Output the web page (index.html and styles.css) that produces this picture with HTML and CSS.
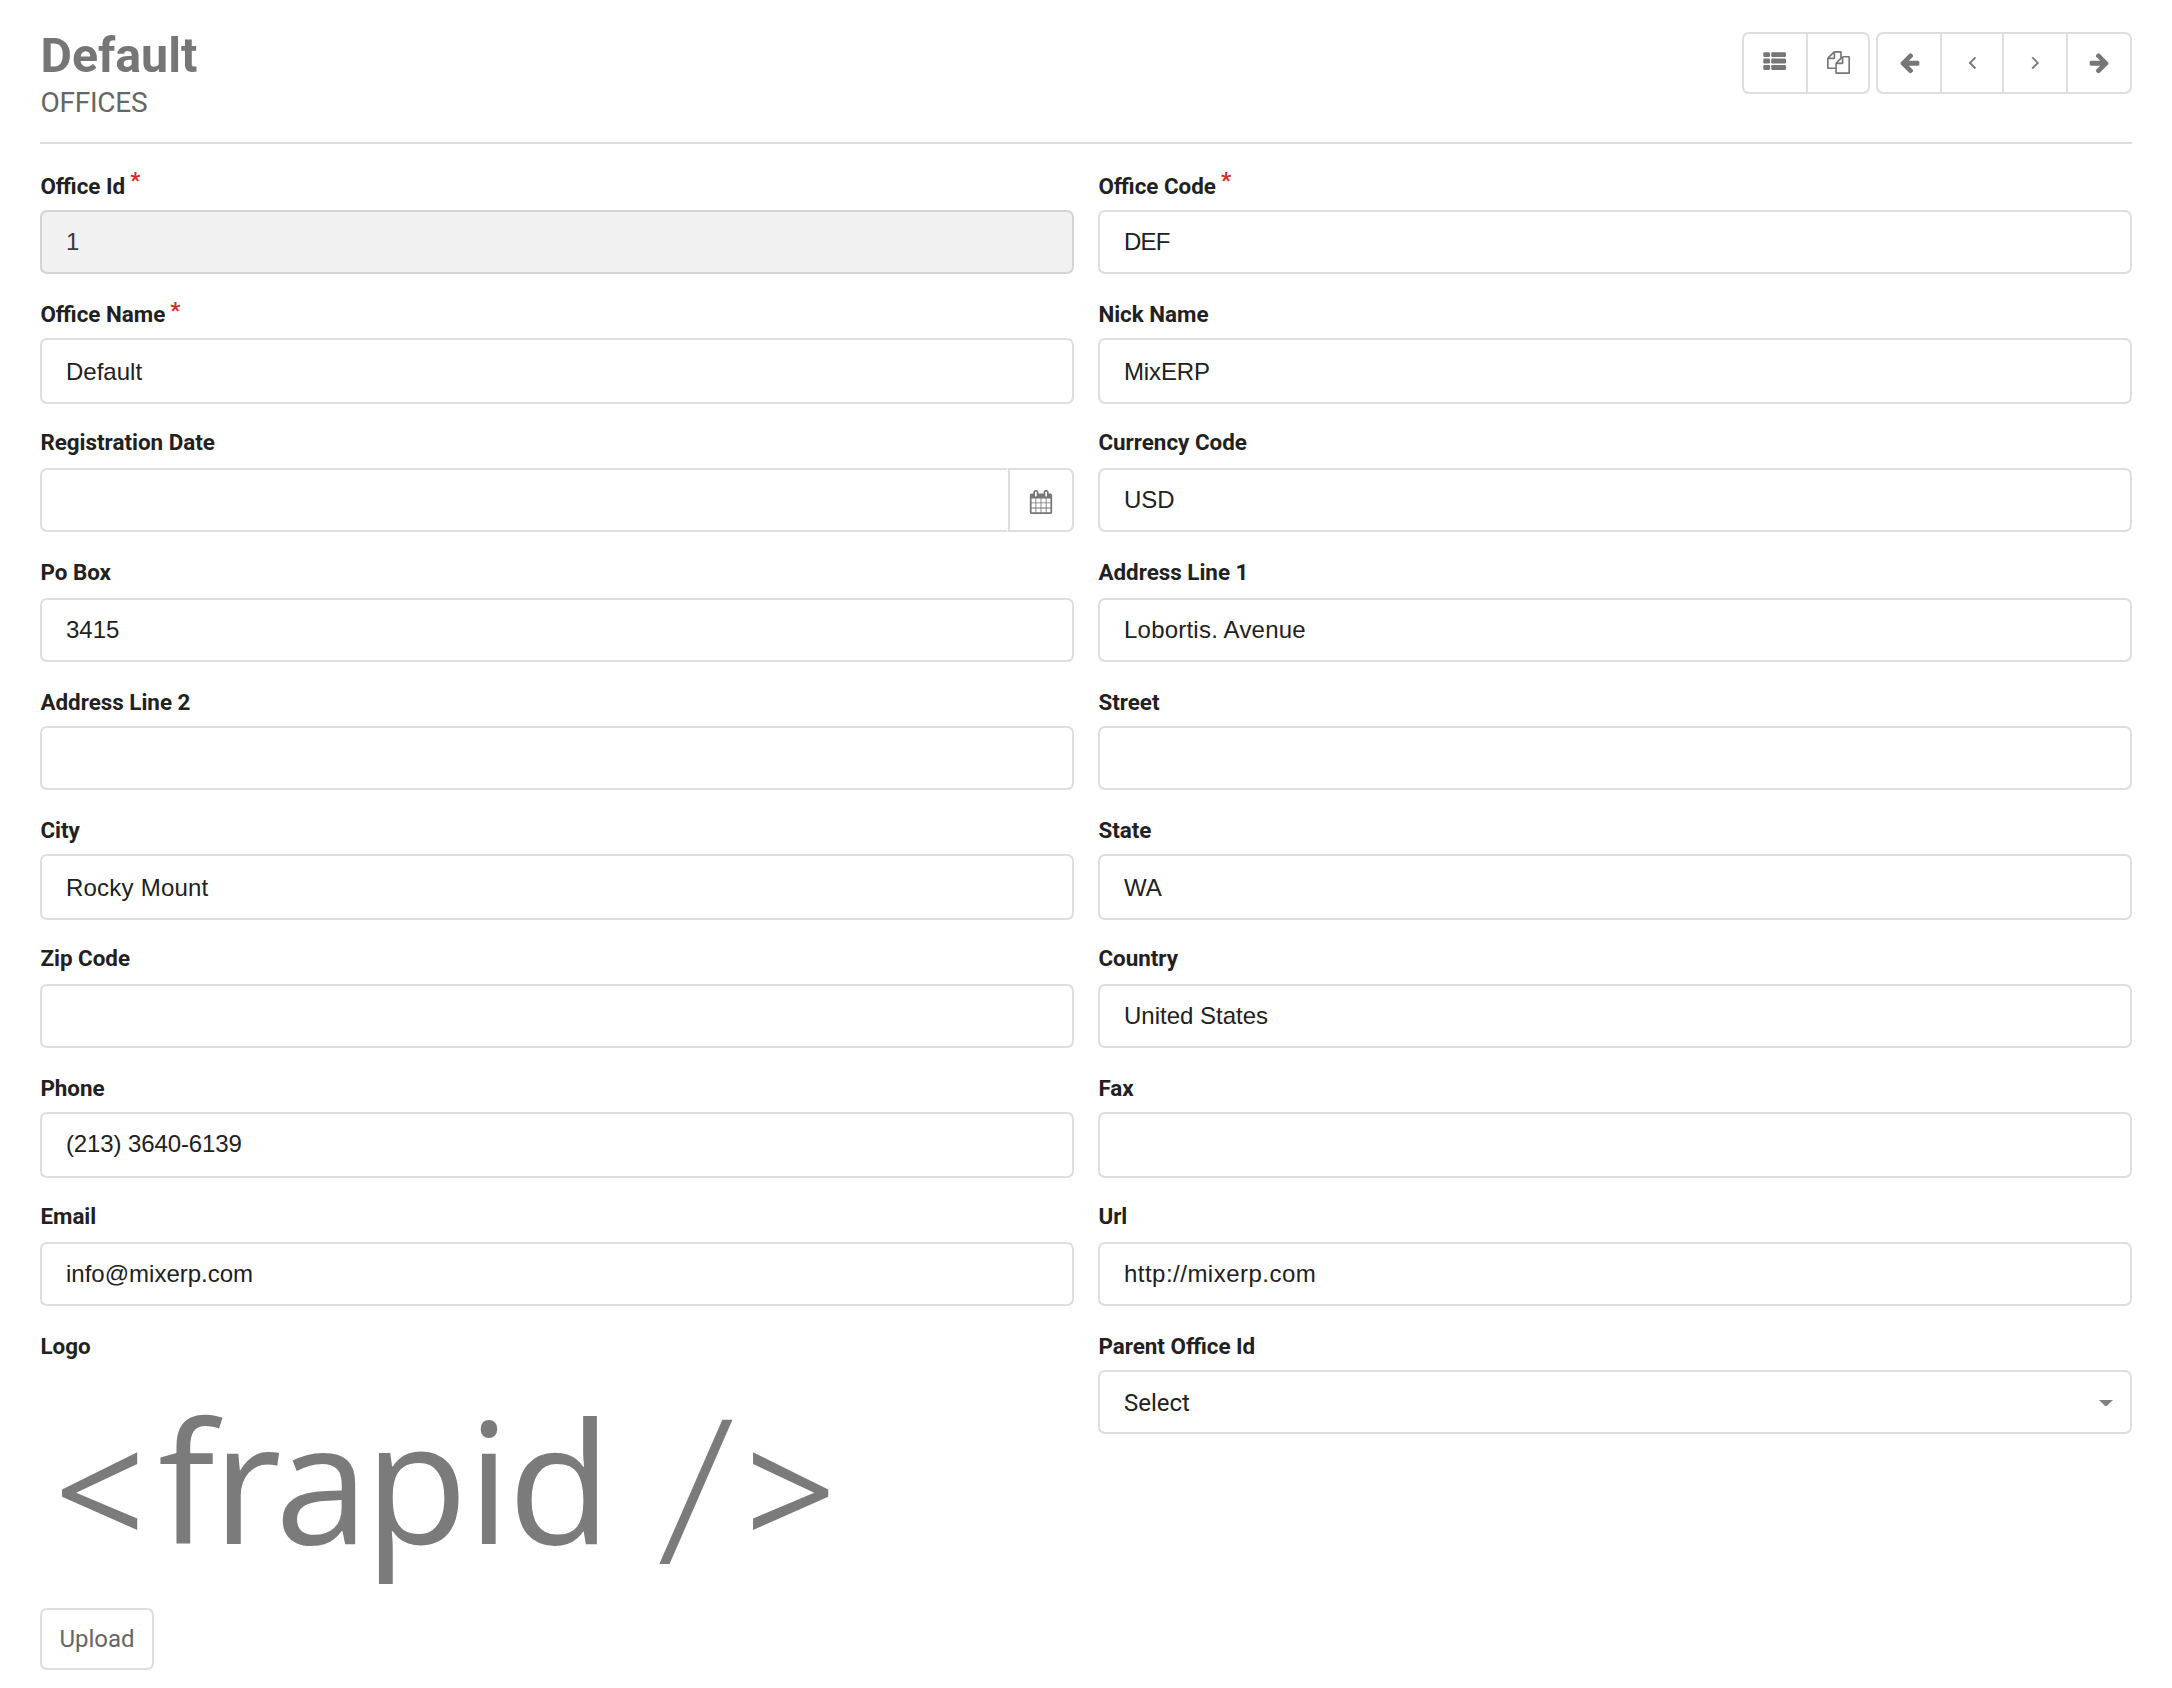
FILE: index.html
```html
<!DOCTYPE html>
<html lang="en">
<head>
<meta charset="utf-8">
<title>Default - Offices</title>
<link rel="stylesheet" href="styles.css">
</head>
<body>
<header class="page-header">
  <div class="heading">
    <h1 class="title">Default</h1>
    <p class="subtitle">OFFICES</p>
  </div>
  <nav class="toolbar">
    <div class="button-group">
      <button class="tool" aria-label="List"><svg class="icon" viewBox="0 0 24 24" width="24" height="24"><rect x="0.3" y="2.2" width="6.7" height="4.8" rx="1.2"/><rect x="8.2" y="2.2" width="14.8" height="4.8" rx="1.2"/><rect x="0.3" y="8.6" width="6.7" height="4.8" rx="1.2"/><rect x="8.2" y="8.6" width="14.8" height="4.8" rx="1.2"/><rect x="0.3" y="15.1" width="6.7" height="4.8" rx="1.2"/><rect x="8.2" y="15.1" width="14.8" height="4.8" rx="1.2"/></svg></button>
      <button class="tool tool-narrow" aria-label="Duplicate"><svg class="icon" viewBox="0 0 1792 1792" width="23" height="23"><path d="M1696 384q40 0 68 28t28 68v1216q0 40-28 68t-68 28h-960q-40 0-68-28t-28-68v-288h-544q-40 0-68-28t-28-68v-672q0-40 20-88t48-76l408-408q28-28 76-48t88-20h416q40 0 68 28t28 68v328q68-40 128-40h416zm-544 213l-299 299h299v-299zm-640-384l-299 299h299v-299zm196 647l316-316v-416h-384v416q0 40-28 68t-68 28h-416v640h512v-256q0-40 20-88t48-76zm956 804v-1152h-384v416q0 40-28 68t-68 28h-416v640h896z"/></svg></button>
    </div>
    <div class="button-group">
      <button class="tool" aria-label="First"><svg class="icon" viewBox="0 0 1792 1792" width="23" height="23"><path d="M1664 896v128q0 53-32.500 90.500t-84.500 37.500h-704l293 294q38 36 38 90t-38 90l-75 76q-37 37-90 37-52 0-91-37l-651-652q-37-37-37-90 0-52 37-91l651-650q38-38 91-38 52 0 90 38l75 74q38 38 38 91t-38 91l-293 293h704q52 0 84.500 37.500t32.500 90.500z"/></svg></button>
      <button class="tool tool-narrow" aria-label="Previous"><svg class="icon icon-line" viewBox="0 0 24 24" width="24" height="24"><path d="M15.500 7.300 9.900 12.900l5.600 5.600"/></svg></button>
      <button class="tool" aria-label="Next"><svg class="icon icon-line" viewBox="0 0 24 24" width="24" height="24"><path d="M9.200 7.300l5.600 5.600-5.600 5.600"/></svg></button>
      <button class="tool" aria-label="Last"><svg class="icon icon-flip" viewBox="0 0 1792 1792" width="23" height="23"><path d="M1664 896v128q0 53-32.500 90.500t-84.500 37.500h-704l293 294q38 36 38 90t-38 90l-75 76q-37 37-90 37-52 0-91-37l-651-652q-37-37-37-90 0-52 37-91l651-650q38-38 91-38 52 0 90 38l75 74q38 38 38 91t-38 91l-293 293h704q52 0 84.500 37.500t32.500 90.500z"/></svg></button>
    </div>
  </nav>
</header>

<form class="form">
  <div class="field"><label class="label">Office Id<span class="star star-high">*</span></label><input class="input" value="1" disabled></div>
  <div class="field"><label class="label">Office Code<span class="star star-high">*</span></label><input class="input tight" value="DEF"></div>

  <div class="field"><label class="label">Office Name<span class="star">*</span></label><input class="input tall" value="Default"></div>
  <div class="field"><label class="label">Nick Name</label><input class="input tall snug" value="MixERP"></div>

  <div class="field spaced"><label class="label">Registration Date</label>
    <div class="date"><input class="input date-input"><button type="button" class="date-button" aria-label="Pick a date"><svg class="icon" viewBox="0 0 1792 1792" width="24" height="24"><path d="M192 1664h288v-288h-288v288zm352 0h320v-288h-320v288zm-352-352h288v-320h-288v320zm352 0h320v-320h-320v320zm-352-384h288v-288h-288v288zm736 736h320v-288h-320v288zm-384-736h320v-288h-320v288zm768 736h288v-288h-288v288zm-384-352h320v-320h-320v320zm-352-864v-288q0-13-9.500-22.500t-22.500-9.500h-64q-13 0-22.500 9.500t-9.500 22.500v288q0 13 9.500 22.500t22.500 9.500h64q13 0 22.500-9.500t9.500-22.500zm736 864h288v-320h-288v320zm-384-384h320v-288h-320v288zm384 0h288v-288h-288v288zm32-480v-288q0-13-9.500-22.500t-22.500-9.500h-64q-13 0-22.500 9.500t-9.500 22.500v288q0 13 9.500 22.500t22.500 9.500h64q13 0 22.500-9.500t9.500-22.500zm384-64v1280q0 52-38 90t-90 38h-1408q-52 0-90-38t-38-90v-1280q0-52 38-90t90-38h128v-96q0-66 47-113t113-47h64q66 0 113 47t47 113v96h384v-96q0-66 47-113t113-47h64q66 0 113 47t47 113v96h128q52 0 90 38t38 90z"/></svg></button></div>
  </div>
  <div class="field spaced"><label class="label">Currency Code</label><input class="input" value="USD"></div>

  <div class="field spaced"><label class="label">Po Box</label><input class="input" value="3415"></div>
  <div class="field spaced"><label class="label">Address Line 1</label><input class="input open" value="Lobortis. Avenue"></div>

  <div class="field"><label class="label">Address Line 2</label><input class="input"></div>
  <div class="field"><label class="label">Street</label><input class="input"></div>

  <div class="field"><label class="label">City</label><input class="input tall open" value="Rocky Mount"></div>
  <div class="field"><label class="label">State</label><input class="input tall" value="WA"></div>

  <div class="field spaced"><label class="label">Zip Code</label><input class="input"></div>
  <div class="field spaced"><label class="label">Country</label><input class="input" value="United States"></div>

  <div class="field"><label class="label">Phone</label><input class="input tall raised snug" value="(213) 3640-6139"></div>
  <div class="field"><label class="label">Fax</label><input class="input tall"></div>

  <div class="field spaced"><label class="label">Email</label><input class="input" value="info@mixerp.com"></div>
  <div class="field spaced"><label class="label">Url</label><input class="input wide" value="http://mixerp.com"></div>

  <div class="field"><label class="label">Logo</label>
    <svg class="logo" viewBox="40 1370 830 238" width="830" height="238" role="img" aria-label="frapid">
      <text class="logo-text logo-bracket" x="54" y="1549">&lt;</text>
      <text class="logo-text" x="158 212.5 275 364.500 467.500 508" y="1544">frapid</text>
      <text class="logo-text logo-slash" transform="translate(657 1564) skewX(-3.600)">/</text>
      <text class="logo-text logo-bracket" x="745" y="1549">&gt;</text>
    </svg>
    <button type="button" class="upload">Upload</button>
  </div>
  <div class="field"><label class="label">Parent Office Id</label>
    <div class="input select"><span>Select</span><svg class="caret" viewBox="0 0 14 6" width="14" height="6"><path d="M0 0h14L7.800 6H6.200z"/></svg></div>
  </div>
</form>
</body>
</html>
```
FILE: styles.css
```css
* { box-sizing: border-box; }

body {
  margin: 0;
  padding: 0 40px;
  background: #fff;
  color: #212121;
  font-family: Roboto, "Liberation Sans", sans-serif;
  font-size: 24px;
}

button, input { font: inherit; margin: 0; }

.page-header {
  display: flex;
  justify-content: space-between;
  height: 144px;
  padding-top: 32px;
  border-bottom: 2px solid #dedede;
}

.title {
  margin: -5px 0 0;
  padding-left: 0.5px;
  font-size: 48.3px;
  font-weight: 700;
  line-height: 58px;
  color: #767676;
}

.subtitle {
  margin: 2px 0 0;
  padding-left: 0.5px;
  font-size: 28px;
  line-height: 32px;
  letter-spacing: -0.25px;
  color: #666;
}

.toolbar { display: flex; gap: 6px; height: 62px; }

.button-group {
  display: flex;
  border: 2px solid #dedede;
  border-radius: 7px;
}

.tool {
  display: flex;
  align-items: center;
  justify-content: center;
  width: 62px;
  padding: 0 0 2px;
  border: 0;
  background: none;
}

.tool + .tool { width: 64px; border-left: 2px solid #dedede; }
.tool + .tool-narrow { width: 62px; }

.icon { display: block; fill: #767676; }
.icon-line { fill: none; stroke: #767676; stroke-width: 1.8; }
.icon-flip { transform: scaleX(-1); }

.form {
  display: grid;
  grid-template-columns: 1fr 1fr;
  grid-template-rows: 128px 128px 130px 130px 128px 128px 130px 128px 130px auto;
  column-gap: 24px;
  padding-top: 30px;
}

.field { display: flex; flex-direction: column; align-items: stretch; }

.label {
  height: 24px;
  margin-bottom: 12px;
  padding-left: 0.4px;
  font-size: 22.4px;
  font-weight: 700;
  line-height: 24px;
}

.spaced .label { margin-bottom: 14px; }

.star {
  margin-left: 5px;
  color: #db2828;
  line-height: 0;
  vertical-align: 4px;
}

.star-high { vertical-align: 6px; }

.input {
  width: 100%;
  height: 64px;
  padding: 0 24px;
  border: 2px solid #dedede;
  border-radius: 7px;
  background: #fff;
  color: #212121;
  font-family: "Liberation Sans", Arial, sans-serif;
  font-size: 24px;
}

.input:disabled { background: #f1f1f1; border-color: #d4d4d4; color: #3a3a3a; }
.tall { height: 66px; padding-top: 2px; }
.raised { padding-top: 0; padding-bottom: 2px; }

.tight { letter-spacing: -0.8px; }
.snug { letter-spacing: -0.12px; }
.open { letter-spacing: 0.22px; }
.wide { letter-spacing: 0.48px; }

.date { display: flex; }

.date-input {
  flex: 1;
  border-right-color: transparent;
  border-radius: 7px 0 0 7px;
}

.date-button {
  display: flex;
  align-items: center;
  justify-content: center;
  width: 66px;
  height: 64px;
  padding: 3px 0 0;
  border: 2px solid #dedede;
  border-radius: 0 7px 7px 0;
  background: #fff;
}

.select {
  display: flex;
  align-items: center;
  justify-content: space-between;
  padding: 2px 17px 0 24px;
  font-family: Roboto, sans-serif;
}

.caret { fill: #808080; }

.logo { display: block; overflow: visible; }

.logo-text {
  fill: #7b7b7b;
  font-family: "Open Sans", "Noto Sans", sans-serif;
  font-size: 169px;
}

.logo-bracket { font-size: 160px; }
.logo-slash { font-size: 202px; font-weight: 300; }

.upload {
  align-self: flex-start;
  width: 114px;
  height: 62px;
  padding: 0;
  border: 2px solid #dedede;
  border-radius: 7px;
  background: #fff;
  color: #666;
}
```
